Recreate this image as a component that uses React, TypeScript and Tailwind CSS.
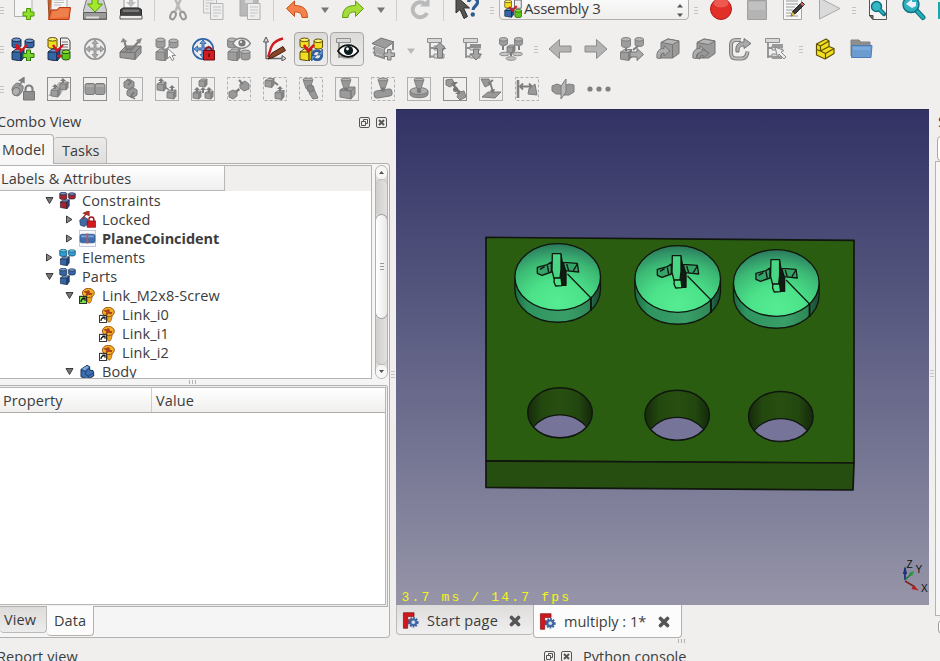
import React from "react";

type Pal = { t: string; l: string; r: string; s: string };

const GREY: Pal = { t: "#b6b6b6", l: "#9d9d9d", r: "#8b8b8b", s: "#7b7b7b" };
const BLUE: Pal = { t: "#6f9bd0", l: "#3465a4", r: "#204a87", s: "#14243c" };
const YELLOW: Pal = { t: "#fff06a", l: "#f3dc1e", r: "#d0b010", s: "#4a3d05" };
const GREEN: Pal = { t: "#8ae234", l: "#5fc41a", r: "#3f9a06", s: "#1c4a06" };
const RED: Pal = { t: "#6c8fc4", l: "#a3262f", r: "#2c4a85", s: "#241830" };
const CYAN: Pal = { t: "#5fd0f5", l: "#2f9fd8", r: "#1c6ba8", s: "#14324c" };

function Cyl({ x, y, w = 9, h = 10, p = GREY }: { x: number; y: number; w?: number; h?: number; p?: Pal }) {
  const r = w / 2;
  return (
    <g stroke={p.s} strokeWidth="0.9">
      <path d={`M${x} ${y + 1.8}v${h - 3.6}a${r} 1.8 0 0 0 ${w} 0v${-(h - 3.6)}z`} fill={p.l} />
      <ellipse cx={x + r} cy={y + 1.8} rx={r} ry="1.8" fill={p.t} />
    </g>
  );
}

function Cube({ x, y, s = 10, p = GREY }: { x: number; y: number; s?: number; p?: Pal }) {
  const d = s * 0.25;
  return (
    <g stroke={p.s} strokeWidth="0.9" strokeLinejoin="round">
      <path d={`M${x} ${y + d}l${d * 1.4} ${-d}h${s - d * 1.4}l${-d} ${d * 1.2}z`} fill={p.t} />
      <path d={`M${x} ${y + d}h${s - d}v${s - d}l${-(s - d)} ${-d * 0.5}z`} fill={p.l} />
      <path d={`M${x + s - d} ${y + d}l${d} ${-d}v${s - d * 1.2}l${-d} ${d * 1.2}z`} fill={p.r} />
    </g>
  );
}

function Icon({ children, size = 24, className = "" }: { children: React.ReactNode; size?: number; className?: string }) {
  return (
    <svg width={size} height={size} viewBox="0 0 24 24" fill="none" className={"shrink-0 " + className}>
      {children}
    </svg>
  );
}

function Cell({ children, on = false }: { children: React.ReactNode; on?: boolean }) {
  return (
    <div className="flex h-[34px] w-9 shrink-0 items-center justify-center">
      <div
        className={
          on
            ? "flex h-[34px] w-[34px] items-center justify-center rounded-[4px] border border-[#a9a8a6] bg-gradient-to-b from-[#dcdbda] to-[#ececeb]"
            : "flex items-center justify-center"
        }
      >
        {children}
      </div>
    </div>
  );
}

function Handle({ className }: { className: string }) {
  return (
    <div className={"flex shrink-0 flex-col items-center gap-[2px] " + className}>
      <i className="h-px w-1 bg-[#c4c3c1]" />
      <i className="h-px w-1 bg-[#c4c3c1]" />
      <i className="h-px w-1 bg-[#c4c3c1]" />
    </div>
  );
}

function Sep() {
  return (
    <div className="flex w-[11px] shrink-0 justify-center">
      <i className="h-[22px] w-px bg-[#cfcecc]" />
    </div>
  );
}

function Caret({ w, color = "#777" }: { w: string; color?: string }) {
  return (
    <div className={"flex shrink-0 justify-center " + w}>
      <svg width="8" height="6" viewBox="0 0 8 6">
        <path d="M0 0.5h8L4 6z" fill={color} />
      </svg>
    </div>
  );
}

const Up = ({ x, y, h = 4 }: { x: number; y: number; h?: number }) => (
  <path d={`M${x} ${y}l-3 3h2v${h}h2v${-h}h2z`} fill="#7a7a7a" />
);

function Frame({ dashed = false, dark = false }: { dashed?: boolean; dark?: boolean }) {
  return <rect x="0.5" y="0.5" width="23" height="23" stroke={dark ? "#8d8d8d" : "#b0b0b0"} strokeDasharray={dashed ? "3 2" : undefined} />;
}

const Cone = ({ x, y }: { x: number; y: number }) => (
  <g fill="#999" stroke="#7b7b7b" strokeWidth="0.9">
    <path d={`M${x - 5} ${y}l3 9h4l3-9z`} />
    <ellipse cx={x} cy={y} rx="5" ry="1.3" fill="#b4b4b4" />
  </g>
);

function TopRow() {
  return (
    <div className="-mt-[7px] flex h-[34px] items-center">
      <Handle className="w-[5px] items-start" />
      <Cell>
        <Icon>
          <path d="M3.500-4h14l3.500 4v18.500h-17.500z" fill="#f5f5f5" stroke="#b0b0b0" />
          <path d="M15.500 12.500h4v3.500h3.500v4h-3.500v3.500h-4v-3.500H12v-4h3.500z" fill="#8fe02c" stroke="#4e9a06" transform="translate(0 -2)" />
        </Icon>
      </Cell>
      <Cell>
        <Icon>
          <path d="M1 0h18v20H2z" fill="#c3602a" stroke="#9a4a22" />
          <path d="M5 0h15v12H4z" fill="#f4f4f4" stroke="#b1b1b1" />
          <path d="M7 2h10M7 4.500h10M7 7h7" stroke="#bbb" />
          <path d="M1.500 21.500l2.500-9.500h6l2-2.500h11.500l-1.500 12z" fill="#ec6a34" stroke="#b83a12" />
          <path d="M4 20l2-7h5l2-2.500h9l-1 8z" fill="#f08b55" opacity=".7" />
        </Icon>
      </Cell>
      <Cell>
        <Icon>
          <path d="M4 0h16l4 14v7.500H0V14z" fill="#cfcfcf" stroke="#777" />
          <path d="M.5 14.500h23v6.500H.5z" fill="#9b9b9b" stroke="#5d5d5d" />
          <path d="M3 19.500h13" stroke="#ddd" strokeWidth="2" />
          <path d="M9 0h6v6h4.500L12 14 4.500 6H9z" fill="#a5e82c" stroke="#4e9a06" />
        </Icon>
      </Cell>
      <Cell>
        <Icon>
          <path d="M5-2h14v12H5z" fill="#f5f5f5" stroke="#999" />
          <path d="M10 0h4v4h3L12 9 7 4h3z" fill="#bdbdbd" />
          <path d="M1.500 11.500L4 10h16l2.500 1.500v8h-21z" fill="#444" stroke="#2d2d2d" />
          <path d="M4 11.500h16v2.500H4z" fill="#777" />
          <path d="M1 17.500h22V21H1z" fill="#ececec" stroke="#555" />
        </Icon>
      </Cell>
      <Sep />
      <Cell>
        <Icon>
          <path d="M7-4l7.500 17M17-4L9.500 13" stroke="#b9b9b9" strokeWidth="2.600" />
          <ellipse cx="7" cy="17.500" rx="2.500" ry="4" stroke="#979797" strokeWidth="2" transform="rotate(25 7 17.500)" />
          <ellipse cx="17" cy="17.500" rx="2.500" ry="4" stroke="#979797" strokeWidth="2" transform="rotate(-25 17 17.500)" />
        </Icon>
      </Cell>
      <Cell>
        <Icon>
          <path d="M1.500-2h13v17h-13z" fill="#ededed" stroke="#bdbdbd" />
          <path d="M3.500 2h8M3.500 5h8M3.500 8h3M3.500 11h3" stroke="#c4c4c4" />
          <path d="M8.500 5.500h12.500v16h-12.500z" fill="#eee" stroke="#b3b3b3" />
          <path d="M11 9h8M11 12h8M11 15h8M11 18h5" stroke="#c4c4c4" />
        </Icon>
      </Cell>
      <Cell>
        <Icon>
          <path d="M2-2h18v20H2z" fill="#b8b8b8" stroke="#a6a6a6" />
          <path d="M7 0h8v5H7z" fill="#ddd" />
          <path d="M9.500 5.500h12.500v16h-12.500z" fill="#eee" stroke="#b0b0b0" />
          <path d="M12 9h8M12 12h8M12 15h8M12 18h5" stroke="#c4c4c4" />
        </Icon>
      </Cell>
      <Sep />
      <Cell>
        <Icon>
          <path d="M1.500 10.500l8-7.500v4.500c8 0 13 3 13 12h-5.500c-.5-4.500-2.500-5.500-7.500-5.500v4.500z" fill="#f5824a" stroke="#c9501c" />
        </Icon>
      </Cell>
      <Caret w="w-5" />
      <Cell>
        <Icon>
          <path d="M22.500 10.500l-8-7.500v4.500c-8 0-13 3-13 12h5.500c.5-4.500 2.500-5.500 7.500-5.500v4.500z" fill="#a6dc3a" stroke="#5f9f12" />
        </Icon>
      </Cell>
      <Caret w="w-5" />
      <Sep />
      <Cell>
        <Icon>
          <path d="M19 15A7.500 7.500 0 1 1 17 6" stroke="#bababa" strokeWidth="4" />
          <path d="M12 8.500h9.500V0z" fill="#bababa" />
        </Icon>
      </Cell>
      <Sep />
      <Cell>
        <Icon>
          <path d="M1-2v17l4-3.500 4 9 3.500-2-4-8.500h6z" fill="#555" stroke="#2e2e2e" />
          <path d="M13.500 4c.5-5 9.500-5 9 .5-.5 4-4.500 3.500-4.500 7.500" stroke="#2c5c94" strokeWidth="3.200" />
          <circle cx="17.800" cy="16.500" r="2.200" fill="#2c5c94" />
        </Icon>
      </Cell>
      <Handle className="w-[14px]" />
      <div className="-mt-[10px] flex h-[30px] w-[190px] shrink-0 items-center rounded-[4px] border border-[#b3b1af] bg-gradient-to-b from-white to-[#efeeed] pt-[7px] pr-[5px] pl-[4px]">
        <Icon size={18}>
          <Cyl x={1} y={0} p={YELLOW} h={11} />
          <path d="M14 0h9v11h-9z" fill="#eee" stroke="#444" />
          <Cube x={1} y={11} s={12} p={BLUE} />
          <Cyl x={14.500} y={12.500} p={GREEN} h={11} />
          <path d="M7 9l4 5 6-6" stroke="#d01820" strokeWidth="2.500" />
        </Icon>
        <span className="ml-[2px] text-[15px] leading-none tracking-[-0.250px]">Assembly 3</span>
        <svg width="6" height="13" viewBox="0 0 6 13" className="ml-auto translate-y-[2px]">
          <path d="M0 3.500L3 0l3 3.500zM0 9.500L3 13l3-3.500z" fill="#555" />
        </svg>
      </div>
      <Handle className="w-[13px]" />
      <div className="w-px shrink-0" />
      <Cell>
        <Icon>
          <circle cx="12" cy="11" r="10.500" fill="#e23028" stroke="#b01a16" />
          <ellipse cx="12" cy="5" rx="7.500" ry="4.500" fill="#f2695f" opacity=".7" />
        </Icon>
      </Cell>
      <Cell>
        <Icon>
          <path d="M2.500 2.500h19v19h-19z" fill="#b4b4b4" stroke="#a0a0a0" />
          <path d="M4 4h16v8H4z" fill="#c0c0c0" />
        </Icon>
      </Cell>
      <Cell>
        <Icon>
          <path d="M2.500-2h18v23.500h-18z" fill="#f7f7f7" stroke="#a5a5a5" />
          <path d="M5 3h12M5 6h12M5 9h9M5 12h7M5 15h5M5 18h12" stroke="#999" />
          <path d="M10 18l2-5 9-9 2.500 2.500-9 9z" fill="#3b3b3b" stroke="#222" />
          <path d="M20 5l2.500 2.500" stroke="#e06a70" strokeWidth="2" />
          <path d="M10 18l1.500-4 2.500 2.500z" fill="#e6c33c" />
        </Icon>
      </Cell>
      <Cell>
        <Icon>
          <path d="M2.500 0v21L23 10.500z" fill="#dadada" stroke="#a8a8a8" />
        </Icon>
      </Cell>
      <Handle className="w-[13px]" />
      <Cell>
        <Icon>
          <path d="M3.500-2h17v23.500H7l-3.500-4z" fill="#f5f5f5" stroke="#555" />
          <path d="M3.500 17.500H7v4z" fill="#777" stroke="#444" />
          <path d="M13 11l5 5" stroke="#12707c" strokeWidth="4.500" strokeLinecap="round" />
          <circle cx="10.500" cy="8.500" r="5" fill="#35b8c4" stroke="#107080" strokeWidth="1.500" />
          <path d="M13.500 11.500l4 4" stroke="#28b4c0" strokeWidth="2" strokeLinecap="round" />
        </Icon>
      </Cell>
      <Cell>
        <Icon>
          <path d="M14 12l7 7.500" stroke="#12707c" strokeWidth="5" strokeLinecap="round" />
          <path d="M14 12l7 7.500" stroke="#24adb9" strokeWidth="3" strokeLinecap="round" />
          <circle cx="9" cy="6.500" r="8" fill="#2eb2be" stroke="#107080" strokeWidth="1.400" />
          <path d="M4 6l6-5v3h4v4l-4 2z" fill="#eef" />
        </Icon>
      </Cell>
      <div className="ml-[6px] h-[17px] w-[2px] shrink-0 bg-[#1da6b2]" />
    </div>
  );
}

const Gear4 = ({ c, f }: { c: string; f: string }) => (
  <g>
    <circle cx="12" cy="12" r="10.200" stroke={c} strokeWidth="1.700" fill="#ececec" />
    <path d="M12 3l3 3.500h-2v4.500h4.500V9L21 12l-3.500 3v-2H13v4.500h2L12 21l-3-3.500h2V13H6.500v2L3 12l3.500-3v2H11V6.500H9z" fill={f} stroke={c} strokeWidth=".9" />
  </g>
);

const Doc = () => (
  <g fill="#d8d8d8" stroke="#8f8f8f">
    <path d="M1.500 1.500h14v4h-14zM8 9h10v4H8zM8 17h10v4H8z" />
    <path d="M4 6v15M4 11H8M4 19.500H8" strokeWidth="1.800" />
  </g>
);

const Curve = () => (
  <path d="M1 21c-1-7 3-10 7-9.500V8.500l6 5.500-6 5v-3c-3 0-4 2-3.500 5.500z" fill="#adadad" stroke="#747474" />
);

function MidRow() {
  return (
    <div className="mt-[5px] flex h-[34px] items-center">
      <Handle className="w-[5px] items-start" />
      <Cell>
        <Icon>
          <Cyl x={1} y={1} p={BLUE} />
          <Cyl x={14} y={2} p={BLUE} h={9} />
          <Cube x={1} y={12} s={12} p={BLUE} />
          <path d="M6 8l4 6 6-6M5 7l1.500 6" stroke="#d01820" strokeWidth="2.300" />
          <path d="M15.500 13h4v3.500H23v4h-3.500V24h-4v-3.500H12v-4h3.500z" fill="#76d42a" stroke="#2c7506" />
        </Icon>
      </Cell>
      <Cell>
        <Icon>
          <Cyl x={1} y={0.500} p={YELLOW} h={11} />
          <path d="M13.500 1h7l2.500 3v9h-9.500z" fill="#eee" stroke="#444" />
          <path d="M15 5h6M15 7.500h6M15 10h6" stroke="#777" />
          <Cube x={1} y={12} s={12} p={BLUE} />
          <Cyl x={15} y={13} w={8} p={GREEN} />
          <path d="M6 8l4 6 6-6M10 19h5" stroke="#d01820" strokeWidth="2.300" />
        </Icon>
      </Cell>
      <Cell>
        <Icon>
          <Gear4 c="#929292" f="#aaa" />
        </Icon>
      </Cell>
      <Cell>
        <Icon>
          <path d="M1 15l6-6h15l-6 6.500zM1 15l15 .5v7L1 20.500zM16 15.500l6-6.500v7l-6 6.500z" fill="#999" stroke="#757575" />
          <path d="M8 14L5 3M11 14L21 3" stroke="#7b7b7b" strokeWidth="2" />
          <path d="M1.500 5.500L4 1l4.500 3.500zM17 3l6-2-2 6z" fill="#8a8a8a" />
          <path d="M6 13.500c3-5 7-3.500 9-1z" fill="#7b7b7b" />
        </Icon>
      </Cell>
      <Cell>
        <Icon>
          <Cyl x={1} y={1} />
          <Cyl x={14} y={2} h={9} />
          <Cube x={1} y={12} s={12} />
          <path d="M7 11l3 3 4-4" stroke="#888" strokeWidth="1.500" />
          <path d="M12.500 11.500v10l2.500-2 2 4 2-1-2-4h3.500z" fill="#fff" stroke="#8a8a8a" />
        </Icon>
      </Cell>
      <Cell>
        <Icon>
          <Gear4 c="#2c64a8" f="#6e9dd6" />
          <path d="M14.500 15v-3a3.500 3.500 0 0 1 6 0v3" stroke="#9c1218" strokeWidth="2" />
          <path d="M12.500 13.500h11v9.500h-11z" fill="#cf1d22" stroke="#6e0c10" />
          <path d="M17 16.500h2v3.500h-2z" fill="#7b0d12" />
        </Icon>
      </Cell>
      <Cell>
        <Icon>
          <Cyl x={0.500} y={1} />
          <Cube x={1} y={12} s={12} />
          <Cyl x={14} y={13} />
          <path d="M6 6.500C9-.5 19-.5 23.500 6.500 19 13 10 13 6 6.500z" fill="#f4f4f4" stroke="#858585" strokeWidth="1.500" />
          <circle cx="15" cy="6" r="3.600" fill="#777" />
          <circle cx="14" cy="5" r="1.200" fill="#ddd" />
        </Icon>
      </Cell>
      <Cell>
        <Icon>
          <path d="M3 22V2M3 21.500h19" stroke="#66696e" strokeWidth="1.400" />
          <path d="M0.500 5L3 0l2.500 5zM19 18.500l4 3-4 2.500z" fill="#ddd" stroke="#555" />
          <path d="M5 20C8 14 6 5 20 1.500" stroke="#cf1a20" strokeWidth="2.400" />
          <path d="M5 22l4-6L20 9.500l2.500 4L11 20z" fill="#8a4526" stroke="#41200f" />
        </Icon>
      </Cell>
      <Cell on>
        <Icon>
          <Cyl x={1} y={1} p={YELLOW} />
          <Cyl x={15} y={2} w={8.500} p={YELLOW} />
          <Cube x={1} y={12} s={12} p={YELLOW} />
          <path d="M5 8l4 6 6-6" stroke="#d01820" strokeWidth="2.500" />
          <path d="M13.500 19c0-6 6-7 8-3M23 17.500c-1 7-7 6-9 3" stroke="#315f9b" strokeWidth="2.800" />
          <path d="M23.500 12v6h-5zM12.500 24v-5.500h5z" fill="#5d90cc" stroke="#204a87" strokeWidth=".7" />
        </Icon>
      </Cell>
      <Cell on>
        <Icon>
          <Doc />
          <path d="M3 14c4-7 15-8.500 20.500 0C18 22 8 21.500 3 14z" fill="#fff" stroke="#111" strokeWidth="1.800" />
          <circle cx="13.500" cy="13.500" r="4.600" fill="#0b1a1e" />
          <circle cx="12.500" cy="12" r="1.400" fill="#fff" />
        </Icon>
      </Cell>
      <Cell>
        <Icon>
          <path d="M1 6.500L10 1l13 4-9 6.500z" fill="#9c9c9c" stroke="#747474" />
          <path d="M4 9v9l9 3v-9M2 11l2 1M2 15l3 2M22 6v7" stroke="#8a8a8a" strokeWidth="2" />
          <path d="M4 9l9 3v8l-9-4z" fill="#a8a8a8" />
          <path d="M16.500 12.500h3.500V16h3.500v3.500H20V23h-3.500v-3.500H13V16h3.500z" fill="#b5b5b5" stroke="#777" />
        </Icon>
      </Cell>
      <Caret w="w-[19px] pt-1" color="#b9b8b7" />
      <Cell>
        <Icon>
          <Doc />
          <path d="M14 5.500l-5.500 6h3v9.500h5v-9.500h3z" fill="#a5a5a5" stroke="#747474" />
        </Icon>
      </Cell>
      <Cell>
        <Icon>
          <Doc />
          <path d="M8 7h11v4H8z" fill="#8f8f8f" />
          <path d="M14 23l-5.500-6h3v-5h5v5h3z" fill="#a5a5a5" stroke="#747474" />
        </Icon>
      </Cell>
      <div className="w-px shrink-0" />
      <Cell>
        <Icon>
          <Cyl x={0.500} y={0.500} w={8} h={8} />
          <Cyl x={15.500} y={0.500} w={8} h={8} />
          <Cube x={8} y={8} s={8} />
          <path d="M4 9v4M20 9v4M12 15v4" stroke="#7d7d7d" strokeWidth="2" />
          <g fill="#c4c4c4" stroke="#8d8d8d">
            <ellipse cx="5.500" cy="17" rx="5" ry="1.800" />
            <ellipse cx="18.500" cy="17" rx="5" ry="1.800" />
            <ellipse cx="12" cy="21.500" rx="5" ry="1.800" />
          </g>
        </Icon>
      </Cell>
      <Handle className="w-[13px]" />
      <Cell>
        <Icon>
          <path d="M1 12L11.500 2.500v6.500H23v6H11.500v6.500z" fill="#b3b3b3" stroke="#8b8b8b" />
        </Icon>
      </Cell>
      <Cell>
        <Icon>
          <path d="M23 12L12.500 2.500v6.500H1v6h11.500v6.500z" fill="#b3b3b3" stroke="#8b8b8b" />
        </Icon>
      </Cell>
      <Cell>
        <Icon>
          <Cyl x={1.500} y={0.500} />
          <Cyl x={15} y={0.500} w={8.500} h={9} />
          <Cube x={0.500} y={12.500} s={11} />
          <path d="M6 11v3M18 9l-5 4" stroke="#7d7d7d" strokeWidth="2" />
          <path d="M10 15h7v-3.500l6.500 6-6.500 6V20h-7z" fill="#aaa" stroke="#747474" />
        </Icon>
      </Cell>
      <Cell>
        <Icon>
          <path d="M5 5.500L12 2l11 2v12.500L16.500 21H5z" fill="#9a9a9a" stroke="#757575" />
          <path d="M5 5.500L12 2l11 2-6.500 3.500z" fill="#b6b6b6" stroke="#757575" />
          <path d="M16.500 7.500V21" stroke="#757575" />
          <Curve />
        </Icon>
      </Cell>
      <Cell>
        <Icon>
          <path d="M5 5.500L12 2l11 2v12.500L16.500 21H5z" fill="#9a9a9a" stroke="#757575" />
          <path d="M5 5.500L12 2l11 2-6.500 3.500z" fill="#b6b6b6" stroke="#757575" />
          <Curve />
          <path d="M5 21c0-5 3-6 5-6v-3l7 4-6 5v-3c-2 0-3 1-3 4z" fill="#999" stroke="#747474" />
        </Icon>
      </Cell>
      <Cell>
        <Icon>
          <path d="M13 3H8Q3 3 3 8v8q0 5.500 5 5.500h6q5-.5 5.500-7" stroke="#808080" strokeWidth="4" />
          <path d="M13 3H8Q3 3 3 8v8q0 5.500 5 5.500h6q5-.5 5.500-7" stroke="#bdbdbd" strokeWidth="1.800" />
          <path d="M8 15c-1-8 3-10 8-10V1.500l7 5-7 5V9c-4 0-5 2-5 6z" fill="#aaa" stroke="#747474" />
        </Icon>
      </Cell>
      <Cell>
        <Icon>
          <Doc />
          <path d="M8 7h11v4H8zM8 19h10v3H8z" fill="#999" />
          <path d="M11 10l9 3.500-3 1.500 5 5-2 2-5-5-1.500 3z" fill="#eee" stroke="#8a8a8a" />
        </Icon>
      </Cell>
      <Handle className="w-[13px]" />
      <Cell>
        <Icon>
          <g stroke="#5e5106" strokeWidth="1.200" strokeLinejoin="round">
            <path d="M3.500 7l9.500-5 3 2v5.500l5 2v5L12 22l-8.500-4z" fill="#f2de1e" />
            <path d="M3.500 7l4 2v5l5 2.500V22M7.500 9L16 4M3.500 12.500l4 1.500L16 9.500M12.500 16.500l8.500-5" />
          </g>
        </Icon>
      </Cell>
      <Cell>
        <Icon>
          <path d="M2 3h8l2 2h9v14H2z" fill="#8e8e8e" stroke="#808080" />
          <path d="M2.500 8.500h20.500l-1 12H2.500z" fill="#6c9ccf" stroke="#4a7db8" />
          <path d="M4 10h17v3H4z" fill="#7ca8da" />
        </Icon>
      </Cell>
    </div>
  );
}

function LowRow() {
  return (
    <div className="mt-[6px] flex h-[34px] items-center">
      <Handle className="w-[5px] items-start" />
      <Cell>
        <Icon>
          <path d="M1 13c0-3 3-7 6-7l5 3c1 4-3 10-6 10l-4-2z" fill="#9b9b9b" stroke="#777" />
          <ellipse cx="5" cy="14.500" rx="3.500" ry="4" fill="#b0b0b0" stroke="#777" transform="rotate(30 5 14.500)" />
          <path d="M8 9l4-6M8.500 3.500L13 0.500v5z" stroke="#7d7d7d" fill="#7d7d7d" strokeWidth="1.400" />
          <path d="M14.500 16v-4a3.500 3.500 0 0 1 7 0v4" stroke="#808080" strokeWidth="2.200" />
          <path d="M12.500 14.500h11v8.500h-11z" fill="#8f8f8f" stroke="#757575" />
        </Icon>
      </Cell>
      <Cell>
        <Icon>
          <Frame dark />
          <path d="M1 19L12 5h11L12 19z" fill="#b5b5b5" />
          <Cube x={4} y={11} s={9} />
          <Cube x={13} y={5} s={8} />
          <Up x={8} y={7} h={2} />
          <Up x={16} y={1} h={2} />
        </Icon>
      </Cell>
      <Cell>
        <Icon>
          <Frame dark />
          <rect x="2" y="6.500" width="10" height="11" rx="2" fill="#9b9b9b" stroke="#7b7b7b" />
          <rect x="12" y="6.500" width="10" height="11" rx="2" fill="#9b9b9b" stroke="#7b7b7b" />
          <path d="M3 9h8M13 9h8" stroke="#adadad" strokeWidth="2" />
        </Icon>
      </Cell>
      <Cell>
        <Icon>
          <Frame />
          <path d="M5 5l5-3 5 3v5l-4 3-6-3zM8 14l5-4 5 3v5l-5 3-5-3z" fill="#999" stroke="#7b7b7b" />
          <path d="M8 2l4 3-3 3M16 22l-4-3 3-4" stroke="#757575" strokeWidth="1.500" />
        </Icon>
      </Cell>
      <Cell>
        <Icon>
          <Frame />
          <Cube x={2} y={5} s={9} />
          <Cube x={12} y={13} s={9} />
          <Up x={6} y={1} h={2} />
          <Up x={17} y={8} h={3} />
          <path d="M10 10l4 3" stroke="#7d7d7d" strokeWidth="1.500" />
        </Icon>
      </Cell>
      <Cell>
        <Icon>
          <Frame />
          <Cube x={8} y={2} s={8} />
          <Cube x={2} y={14} s={8} />
          <Cube x={14} y={14} s={8} />
          <Up x={6} y={10} h={3} />
          <Up x={12} y={10} h={3} />
          <Up x={18} y={10} h={3} />
        </Icon>
      </Cell>
      <Cell>
        <Icon>
          <Frame dashed />
          <path d="M13 7l5-3 4 3v5l-5 2-4-3zM2 15l4-2 4 2v4l-4 3-4-2z" fill="#999" stroke="#7b7b7b" />
          <path d="M12 3l4 4M12.500 12l-4 3" stroke="#7b7b7b" strokeWidth="2.200" />
        </Icon>
      </Cell>
      <Cell>
        <Icon>
          <Frame dashed />
          <Cube x={2} y={1.500} s={9} />
          <Cube x={12} y={13.500} s={9} />
          <path d="M11 5l4 3" stroke="#7b7b7b" strokeWidth="2" />
          <Up x={17} y={9} h={3} />
        </Icon>
      </Cell>
      <Cell>
        <Icon>
          <Frame dashed />
          <Cone x={9} y={2.500} />
          <path d="M12 13l-2 3 4 6 5-1-4-9z" fill="#999" stroke="#7b7b7b" />
          <circle cx="11.500" cy="11.500" r="3.500" fill="#8a8a8a" stroke="#757575" />
        </Icon>
      </Cell>
      <Cell>
        <Icon>
          <Frame />
          <path d="M5 13l5-3h10l-4 4zM5 13l11 1v8L5 20zM16 14l4-4v7l-4 5z" fill="#9b9b9b" stroke="#7b7b7b" />
          <Cone x={11} y={2.500} />
          <circle cx="11" cy="12" r="1.800" fill="#777" />
        </Icon>
      </Cell>
      <Cell>
        <Icon>
          <Frame dashed />
          <rect x="3" y="13" width="18" height="7" rx="3" fill="#999" stroke="#7b7b7b" transform="rotate(-9 12 16)" />
          <Cone x={12} y={2.500} />
          <circle cx="12" cy="12.500" r="2.300" fill="#7b7b7b" />
        </Icon>
      </Cell>
      <Cell>
        <Icon>
          <Frame />
          <path d="M3 14v3c0 5 18 5 18 0v-3" fill="#939393" stroke="#7b7b7b" />
          <ellipse cx="12" cy="14" rx="9" ry="3.500" fill="#adadad" stroke="#7b7b7b" />
          <Cone x={12} y={2.500} />
          <circle cx="12" cy="14" r="2.300" fill="#7b7b7b" />
        </Icon>
      </Cell>
      <Cell>
        <Icon>
          <Frame dark />
          <path d="M3 3l6-1 3 5-5 3-4-2zM16 15l5-1 2 6-6 3-3-3z" fill="#999" stroke="#7b7b7b" />
          <path d="M9 6l7 9" stroke="#7d7d7d" strokeWidth="2.500" />
          <circle cx="12.500" cy="12.500" r="2.500" fill="#757575" />
          <path d="M10 5h5l-4 4zM12 17l5 0 0-4z" fill="#757575" />
        </Icon>
      </Cell>
      <Cell>
        <Icon>
          <Frame />
          <path d="M2 2l8 0 2 5-6 3zM3 20l6-5h13l-6 6z" fill="#999" stroke="#7b7b7b" />
          <path d="M11 5l3 10M9 7l5-4" stroke="#7b7b7b" strokeWidth="1.800" />
          <path d="M11 13l3 4 2-5z" fill="#7b7b7b" />
        </Icon>
      </Cell>
      <Cell>
        <Icon>
          <Frame dashed />
          <path d="M3 3v18" stroke="#828282" strokeWidth="2.600" />
          <path d="M5 9.500h12M8 6.500L5 9.500l3 3M14 6.500l3 3-3 3" stroke="#7b7b7b" strokeWidth="1.800" />
          <path d="M14 12l6-5 2 11-9-1z" fill="#999" stroke="#7b7b7b" />
        </Icon>
      </Cell>
      <Cell>
        <Icon>
          <path d="M1 9l5-2 5 2v8H5l-4-3zM13 9l5-2 5 1v7l-5 3h-5z" fill="#999" stroke="#7d7d7d" />
          <path d="M10 9l5-7v13l-5 7z" fill="#b8b8b8" stroke="#7d7d7d" />
        </Icon>
      </Cell>
      <Cell>
        <Icon>
          <circle cx="3" cy="12" r="2.600" fill="#808080" />
          <circle cx="12" cy="12" r="2.600" fill="#808080" />
          <circle cx="21" cy="12" r="2.600" fill="#808080" />
        </Icon>
      </Cell>
    </div>
  );
}

function DockButtons({ gap }: { gap: string }) {
  return (
    <div className={"flex " + gap}>
      <svg width="11" height="11" viewBox="0 0 11 11" fill="none" stroke="#555">
        <rect x=".5" y=".5" width="10" height="10" rx="1.500" />
        <path d="M4.500 4V2.500h4v4H7M2.500 4.500h4v4h-4z" />
      </svg>
      <svg width="11" height="11" viewBox="0 0 11 11" fill="none" stroke="#555">
        <rect x=".5" y=".5" width="10" height="10" rx="1.500" />
        <path d="M3 3l5 5M8 3L3 8" strokeWidth="2" />
      </svg>
    </div>
  );
}

function GroupIcon({ a, b, c }: { a: Pal; b: Pal; c: Pal }) {
  return (
    <Icon size={17}>
      <Cyl x={1} y={0.500} w={10} h={10} p={a} />
      <Cyl x={13.500} y={1} w={9.500} h={9} p={b} />
      <Cube x={2} y={11} s={12.500} p={c} />
    </Icon>
  );
}

function ScrewIcon({ green = false }: { green?: boolean }) {
  return (
    <Icon size={16}>
      <path d="M8 11c3 0 3 10 7 12 4-1 4-6 5-11z" fill="#eba51e" stroke="#8a4a0c" />
      <ellipse cx="14" cy="7.500" rx="9" ry="7" fill="#f3ae25" stroke="#94520f" strokeWidth="1.400" />
      <path d="M13 3l3 1v3l4 1-1 3-5-1-2 2-2-1 1-3-4-2 2-2 3 1z" fill="#a8401c" />
      <path d="M.5 12.500h11v11H.5z" fill={green ? "#7edb4c" : "#fff"} stroke="#111" strokeWidth="1.500" />
      <path d="M3 21c0-4 2-5 5-5M5 15h4v4" stroke="#111" strokeWidth="1.800" />
    </Icon>
  );
}

const LockedIcon = (
  <Icon size={17}>
    <path d="M1 13l5-5 6 3v8l-5 3-5-2z" fill="#3e6aa6" stroke="#243b60" />
    <path d="M5 11l6-9M7 3l7-3v6z" fill="#c53a30" stroke="#a82a22" strokeWidth="2" />
    <path d="M14 15v-3a3.500 3.500 0 0 1 7 0v3" stroke="#a11218" strokeWidth="2" />
    <path d="M11.500 14h12v9h-12z" fill="#d41a20" stroke="#7e1014" />
  </Icon>
);

const PlaneIcon = (
  <Icon size={17}>
    <path d="M.5.5h23v23H.5z" fill="#f6f8fb" stroke="#9aabc4" />
    <rect x="1.500" y="6" width="21" height="12" rx="2.500" fill="#3d6fae" stroke="#244a80" />
    <path d="M3 9h18" stroke="#6f9fd6" strokeWidth="3" />
    <path d="M10.500 5h2.500v14h-2.500z" fill="#c6505a" />
  </Icon>
);

const BodyIcon = (
  <Icon size={16}>
    <path d="M3 8l9-6 4 2v5l5 1 1 3v5l-9 5-10-4z" fill="#3c70b0" stroke="#17304f" strokeWidth="1.500" />
    <path d="M3 8l7 4 6-7M10 12v4l4 2 8-5M14 18v5" stroke="#17304f" />
    <path d="M4 7.500l8-5 3 2-6 5z" fill="#7aa7dc" />
  </Icon>
);

function Arrow({ open }: { open: boolean }) {
  return (
    <svg width="9" height="9" viewBox="0 0 9 9" className="shrink-0">
      {open ? <path d="M1 1.500h7L4.500 7.500z" fill="#777" stroke="#3c3c3c" /> : <path d="M1.500 1v7l5.500-3.500z" fill="#888" stroke="#3c3c3c" />}
    </svg>
  );
}

function TreeRow({ pad, open, icon, label, bold }: { pad: string; open?: boolean; icon: React.ReactNode; label: string; bold?: string }) {
  return (
    <div className={"flex h-[19px] shrink-0 items-center " + pad}>
      <div className="w-[14px] shrink-0">{open !== undefined && <Arrow open={open} />}</div>
      <div className="w-[23px] shrink-0">{icon}</div>
      <span className={"whitespace-nowrap leading-[19px] " + (bold ?? "text-[14.500px] tracking-[0.120px]")}>{label}</span>
    </div>
  );
}

function Scrollbar() {
  return (
    <div className="flex h-[214px] w-[13px] shrink-0 flex-col overflow-hidden rounded-full border border-[#b2b0ae] bg-[#dddcda]">
      <div className="flex h-[13px] items-center justify-center rounded-b-full bg-[#f7f6f5]">
        <svg width="5" height="3"><path d="M0 3L2.500 0 5 3z" fill="#555" /></svg>
      </div>
      <div className="h-[35px] rounded-t-[6px] border-t border-[#bbb9b7] bg-gradient-to-r from-[#cfcecc] to-[#e2e1e0]" />
      <div className="-mx-px flex h-[105px] flex-col items-center justify-center gap-[2px] rounded-full border border-[#9b9997] bg-gradient-to-r from-white to-[#e9e8e6]">
        <i className="h-px w-1 bg-[#999]" />
        <i className="h-px w-1 bg-[#999]" />
        <i className="h-px w-1 bg-[#999]" />
      </div>
      <div className="h-[46px] rounded-b-[6px] border-b border-[#bbb9b7] bg-gradient-to-r from-[#cfcecc] to-[#e2e1e0]" />
      <div className="flex h-[13px] items-center justify-center rounded-t-full bg-[#f7f6f5]">
        <svg width="5" height="3"><path d="M0 0L2.500 3 5 0z" fill="#555" /></svg>
      </div>
    </div>
  );
}

function ComboView() {
  return (
    <div className="flex w-[390px] shrink-0 flex-col">
      <div className="flex h-[25px] shrink-0 items-center justify-between pt-px pr-[3px]">
        <span className="-ml-[3px] text-[14.500px]">Combo View</span>
        <DockButtons gap="gap-[6px]" />
      </div>
      <div className="flex h-[29px] shrink-0 items-end">
        <div className="z-10 -mb-px h-[30px] w-[54px] rounded-tr-[4px] border border-b-0 border-l-0 border-[#b3b1af] bg-[#f8f7f7] pl-[2px] text-[14.500px] leading-[29px] tracking-[0.100px]">Model</div>
        <div className="h-[26px] w-[53px] rounded-t-[4px] border border-b-0 border-l-0 border-[#bcbab8] bg-gradient-to-b from-[#ecebea] to-[#dfdedc] pl-[8px] text-[14.500px] leading-[25px]">Tasks</div>
      </div>
      <div className="flex h-[475px] shrink-0 flex-col rounded-tr-[4px] rounded-br-[4px] border border-l-0 border-[#b3b1af] bg-[#f6f5f5]">
        <div className="flex h-[215px] shrink-0 gap-[3px] pt-px">
          <div className="flex h-[214px] w-[372px] flex-col overflow-hidden border border-l-0 border-[#b5b3b1] bg-white">
            <div className="flex h-[25px] shrink-0 bg-[#f0efee]">
              <div className="w-[225px] border-r border-b border-[#b9b7b5] bg-gradient-to-b from-white to-[#f0efef] pl-px text-[14.500px] leading-[26px] tracking-[0.100px]">Labels &amp; Attributes</div>
            </div>
            <TreeRow pad="pl-[45px]" open icon={<GroupIcon a={RED} b={RED} c={RED} />} label="Constraints" />
            <TreeRow pad="pl-[65px]" open={false} icon={LockedIcon} label="Locked" />
            <TreeRow pad="pl-[65px]" open={false} icon={PlaneIcon} label="PlaneCoincident" bold="text-[14.500px] font-bold tracking-[-0.050px]" />
            <TreeRow pad="pl-[45px]" open={false} icon={<GroupIcon a={CYAN} b={CYAN} c={BLUE} />} label="Elements" />
            <TreeRow pad="pl-[45px]" open icon={<GroupIcon a={BLUE} b={BLUE} c={BLUE} />} label="Parts" />
            <TreeRow pad="pl-[65px]" open icon={<ScrewIcon green />} label="Link_M2x8-Screw" />
            <TreeRow pad="pl-[85px]" icon={<ScrewIcon />} label="Link_i0" />
            <TreeRow pad="pl-[85px]" icon={<ScrewIcon />} label="Link_i1" />
            <TreeRow pad="pl-[85px]" icon={<ScrewIcon />} label="Link_i2" />
            <TreeRow pad="pl-[65px]" open icon={BodyIcon} label="Body" />
          </div>
          <Scrollbar />
        </div>
        <div className="flex h-[6px] shrink-0 items-center gap-[2px] pl-[189px]">
          <i className="h-1 w-px bg-[#b4b2b0]" />
          <i className="h-1 w-px bg-[#b4b2b0]" />
          <i className="h-1 w-px bg-[#b4b2b0]" />
        </div>
        <div className="h-[222px] w-[388px] shrink-0 rounded-tr-[3px] border border-l-0 border-[#b3b1af] bg-[#f0efee] pt-px pr-px">
          <div className="flex h-[218px] flex-col border border-l-0 border-[#b9b7b5] bg-white">
            <div className="flex h-[25px] border-b border-[#aeacaa] bg-gradient-to-b from-white to-[#f0efee] text-[14.500px] leading-[25px] tracking-[0.100px]">
              <div className="w-[152px] border-r border-[#cfcdcb] pl-[3px]">Property</div>
              <div className="pl-[4px]">Value</div>
            </div>
          </div>
        </div>
        <div className="flex h-[30px] items-start">
          <div className="h-[26px] w-[47px] rounded-b-[4px] border border-t-0 border-l-0 border-[#bcbab8] bg-gradient-to-b from-[#dddcdb] to-[#edecec] pl-[4px] text-[14.500px] leading-[26px] tracking-[0.100px]">View</div>
          <div className="-mt-px h-[30px] w-[47px] rounded-b-[4px] border border-t-0 border-l-0 border-[#b3b1af] bg-[#fcfcfc] pl-[7px] text-[14.500px] leading-[30px] tracking-[0.100px]">Data</div>
        </div>
      </div>
    </div>
  );
}

function Screw({ dx, dy }: { dx: number; dy: number }) {
  return (
    <g transform={`translate(${dx} ${dy})`}>
      <path d="M514.900 277v12.500a42.800 32.800 0 0 0 85.600 0v-12.500z" fill="url(#rim)" stroke="#10160f" strokeWidth="1.300" />
      <ellipse cx="557.700" cy="277" rx="42.800" ry="33.300" fill="url(#dome)" stroke="#10160f" strokeWidth="1.300" />
      <path d="M591 298v13" stroke="#0c120c" strokeWidth="1.800" />
      <path d="M567.500 274L591 298" stroke="#10160f" strokeWidth="1.200" />
      <g transform="translate(480 230) scale(.33333)" stroke="#10160f" strokeWidth="4" strokeLinejoin="round">
        <path d="M172 112l30-8 12-8v30l-28 10-14-6z" fill="#35a468" />
        <path d="M202 106l4 20M180 118l14-8" />
        <path d="M250 98h12l30 2 4 26-40-4z" fill="#35a468" />
        <path d="M260 102l6 20M280 122l12-20" />
        <path d="M243 74l5 28 10 22v42h-14z" fill="#0f1b13" />
        <path d="M217 71h26v48l-3 26h-18l-6-24z" fill="#49d684" />
        <path d="M223 144h20l3 23-19 1-5-12z" fill="#4fe389" />
      </g>
    </g>
  );
}

function Hole({ cx, cy }: { cx: number; cy: number }) {
  return (
    <g transform={`translate(${cx} ${cy})`} stroke="#10160f" strokeWidth="1.400">
      <ellipse rx="32.300" ry="25" fill="url(#bore)" />
      <path d="M-26.500 14.200A31 25 0 0 1 26.500 14.200A32.300 25 0 0 1-26.500 14.200z" fill="#77749a" strokeWidth="1.200" />
    </g>
  );
}

function Scene() {
  return (
    <svg width="533" height="496" viewBox="396 109 533 496" className="block shrink-0 bg-gradient-to-b from-[#323264] to-[#9695a8]" fill="none">
      <defs>
        <linearGradient id="rim">
          <stop offset="0" stopColor="#1e6b43" />
          <stop offset=".15" stopColor="#2f9560" />
          <stop offset=".6" stopColor="#399e68" />
          <stop offset=".86" stopColor="#2f8a59" />
          <stop offset=".92" stopColor="#215f40" />
          <stop offset="1" stopColor="#1b4a33" />
        </linearGradient>
        <radialGradient id="dome" cx=".5" cy=".88" r=".92">
          <stop offset="0" stopColor="#55ec93" />
          <stop offset=".35" stopColor="#4ce28a" />
          <stop offset=".68" stopColor="#3cb974" />
          <stop offset=".86" stopColor="#319066" />
          <stop offset="1" stopColor="#296a50" />
        </radialGradient>
        <linearGradient id="bore">
          <stop offset="0" stopColor="#152a0b" />
          <stop offset=".22" stopColor="#23480f" />
          <stop offset=".5" stopColor="#284f11" />
          <stop offset=".78" stopColor="#22470f" />
          <stop offset="1" stopColor="#14280a" />
        </linearGradient>
      </defs>
      <path d="M396 109.500h533" stroke="#2b2b50" />
      <g stroke="#11160f" strokeWidth="1.700" strokeLinejoin="round">
        <path d="M486 237.300L854 240.300V463L486 461z" fill="#2a5d10" />
        <path d="M486 461L854 463 853 490 486 487.500z" fill="#264e10" />
      </g>
      <Screw dx={0} dy={0} />
      <Screw dx={120} dy={2} />
      <Screw dx={218.600} dy={6} />
      <Hole cx={560} cy={412.800} />
      <Hole cx={677.200} cy={415.300} />
      <Hole cx={780.800} cy={416.500} />
      <g>
        <path d="M905 580V568" stroke="#20307c" strokeWidth="1.800" />
        <path d="M905 566l2.200 8h-4.400z" fill="#20307c" />
        <path d="M905 580l7-7" stroke="#1d7b38" strokeWidth="1.600" />
        <path d="M914 571l-2 5-3-3z" fill="#1d9b38" />
        <path d="M905 581l10 6" stroke="#7c2626" strokeWidth="1.600" />
        <path d="M919 590.500l-7.500-1.500 2-3.500z" fill="#b51c1c" />
        <g fill="#111" fontFamily="Liberation Sans, sans-serif" fontSize="10">
          <text x="906.500" y="567.500">Z</text>
          <text x="915.500" y="572.500">Y</text>
          <text x="921" y="591.500">X</text>
        </g>
      </g>
      <text x="401.500" y="601" fill="#f4f41c" fontFamily="Liberation Mono, monospace" fontSize="13" letterSpacing="2.180">
        3.7 ms / 14.7 fps
      </text>
    </svg>
  );
}

function FreeCadIcon() {
  return (
    <Icon size={17}>
      <path d="M2 1h15v5.500H8V11h6v5H8v7H2z" fill="#d0171e" stroke="#7d1014" />
      <circle cx="16" cy="14.500" r="6" stroke="#3c62a0" strokeWidth="3" strokeDasharray="2.400 1.500" />
      <circle cx="16" cy="14.500" r="4.200" fill="#a9c2e6" stroke="#3c62a0" strokeWidth="2.500" />
      <circle cx="16" cy="14.500" r="1.500" fill="#f5f5f5" />
    </Icon>
  );
}

const Close = () => (
  <svg width="12" height="12" viewBox="0 0 12 12">
    <path d="M2.500 2.500l7 7M9.500 2.500l-7 7" stroke="#555" strokeWidth="3.600" strokeLinecap="round" />
  </svg>
);

function Workspace() {
  return (
    <div className="flex w-[533px] shrink-0 flex-col">
      <Scene />
      <div className="flex h-[33px] items-start">
        <div className="flex h-[30px] w-[137px] items-center rounded-b-[4px] border border-t-0 border-r-0 border-[#bcbab8] bg-gradient-to-b from-[#dddcdb] to-[#f1f0f0] pt-[2px] pl-[5px]">
          <FreeCadIcon />
          <span className="ml-[8px] w-[82px] text-[14.500px] tracking-[0.200px] whitespace-nowrap">Start page</span>
          <Close />
        </div>
        <div className="flex h-[33px] w-[149px] items-center rounded-b-[4px] border border-t-0 border-[#b3b1af] bg-[#fcfcfc] pt-px pl-[5px]">
          <FreeCadIcon />
          <span className="ml-[8px] w-[94px] text-[14.500px] whitespace-nowrap">multiply : 1*</span>
          <Close />
        </div>
      </div>
    </div>
  );
}

function RightEdge() {
  return (
    <div className="flex w-[11px] shrink-0 overflow-hidden">
      <div className="flex w-[6px] shrink-0 flex-col pt-[261px]">
        <Handle className="w-[6px]" />
      </div>
      <div className="w-[5px] shrink-0">
        <div className="h-[27px] overflow-hidden pl-[3px] text-[14.500px] leading-[26px]">S</div>
        <div className="ml-[2px] h-[25px] w-5 rounded-[4px] border border-[#aaa8a6] bg-white" />
        <div className="h-[455px] w-5 border border-[#b5b3b1] bg-[#f7f6f6]" />
        <div className="mt-[4px] ml-[3px] h-[14px] w-5 rounded-[4px] border border-[#999] bg-white" />
      </div>
    </div>
  );
}

export default function App() {
  return (
    <div className="flex h-[661px] w-[940px] flex-col overflow-hidden bg-[#f0efee] font-['Open_Sans','Noto_Sans',sans-serif] text-[#3c3c3c]">
      <div className="h-[109px] shrink-0 overflow-hidden">
        <TopRow />
        <MidRow />
        <LowRow />
      </div>
      <div className="flex h-[529px] shrink-0">
        <ComboView />
        <div className="w-[6px] shrink-0 pt-[262px]">
          <Handle className="w-[6px]" />
        </div>
        <Workspace />
        <RightEdge />
      </div>
      <div className="flex h-[23px] shrink-0">
        <div className="w-[544px] shrink-0 pt-[9px]">
          <span className="-ml-[3px] block text-[14.500px] leading-5 tracking-[0.100px]">Report view</span>
        </div>
        <div className="pt-[13px]">
          <DockButtons gap="gap-[6px]" />
        </div>
        <div className="w-[111px] pt-[9px] pl-[11px] text-[14.500px] leading-5 whitespace-nowrap">Python console</div>
        <div className="-ml-[5px] flex gap-[2px] pt-px">
          <i className="h-1 w-px bg-[#b4b2b0]" />
          <i className="h-1 w-px bg-[#b4b2b0]" />
          <i className="h-1 w-px bg-[#b4b2b0]" />
        </div>
      </div>
    </div>
  );
}
